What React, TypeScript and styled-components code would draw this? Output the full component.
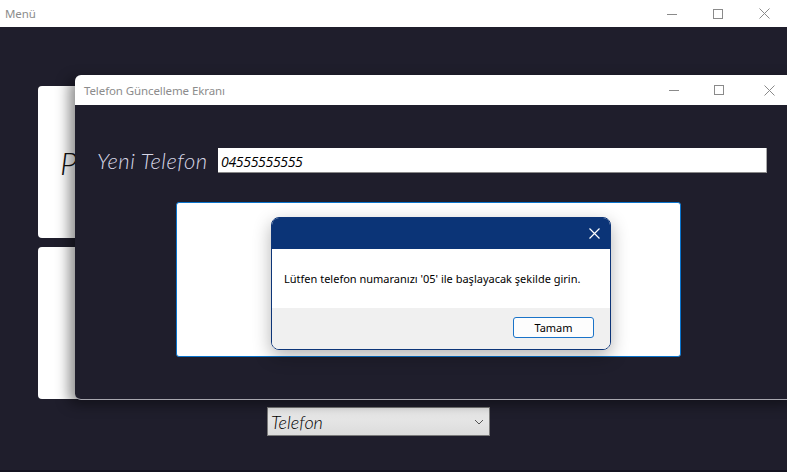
import styled, { createGlobalStyle } from 'styled-components';

const GlobalStyle = createGlobalStyle`
  html, body {
    margin: 0;
    padding: 0;
    width: 787px;
    height: 472px;
    overflow: hidden;
    background: #1f1e2c;
  }
  * { box-sizing: border-box; }
`;

const Screen = styled.div`
  position: relative;
  width: 787px;
  height: 472px;
  overflow: hidden;
  background: #1f1e2c;
  font-family: 'Noto Sans', 'Open Sans', sans-serif;
`;

const TitleBar = styled.div<{ $h: number }>`
  height: ${p => p.$h}px;
  background: #ffffff;
  display: flex;
  align-items: center;
  justify-content: space-between;
  flex-shrink: 0;
`;

const TitleText = styled.span<{ $pad: number }>`
  padding-left: ${p => p.$pad}px;
  font-size: 11.5px;
  color: #8c8c8c;
  letter-spacing: -0.1px;
`;

const Controls = styled.div`
  display: flex;
  align-items: center;
  height: 100%;
`;

const CtrlBtn = styled.div<{ $w: number }>`
  width: ${p => p.$w}px;
  height: 100%;
  display: flex;
  align-items: center;
  justify-content: center;
`;

const Body = styled.div`
  padding: 59px 0 0 38px;
  display: flex;
  flex-direction: column;
`;

const Card = styled.div`
  width: 600px;
  height: 152px;
  background: #ffffff;
  border-radius: 4px;
  margin-bottom: 9px;
  display: flex;
  align-items: center;
  padding-left: 22px;
`;

const CardLetter = styled.span`
  font-family: 'Lato', sans-serif;
  font-style: italic;
  font-weight: 300;
  font-size: 32px;
  color: #111;
`;

const SelectBox = styled.div`
  margin: -1px 0 0 229px;
  width: 223px;
  height: 29px;
  border: 1px solid #7a7a7a;
  background: linear-gradient(#ececec, #dcdcdc);
  display: flex;
  align-items: center;
  justify-content: space-between;
  padding: 0 5px 0 3px;
  font-family: 'Lato', sans-serif;
  font-style: italic;
  font-weight: 300;
  font-size: 18px;
  color: #000;
`;

const InnerWindow = styled.div`
  position: absolute;
  left: 75px;
  top: 75px;
  width: 722px;
  height: 325px;
  display: flex;
  flex-direction: column;
  background: #1f1e2c;
  border-radius: 6px 6px 0 6px;
  border-bottom: 1px solid #a8a8b0;
  overflow: hidden;
  box-shadow: -6px 4px 14px rgba(0, 0, 0, 0.45);
`;

const InnerBody = styled.div`
  flex: 1;
  padding: 43px 0 0 22px;
  display: flex;
  flex-direction: column;
`;

const FieldRow = styled.div`
  display: flex;
  align-items: center;
  gap: 12px;
`;

const FieldLabel = styled.span`
  width: 109px;
  white-space: nowrap;
  font-family: 'Lato', sans-serif;
  font-style: italic;
  font-weight: 300;
  font-size: 22px;
  line-height: 25px;
  color: #d6d6e6;
  letter-spacing: 0.5px;
`;

const FieldInput = styled.div`
  width: 549px;
  height: 25px;
  background: #ffffff;
  border-bottom: 1px solid #888;
  border-right: 1px solid #aaa;
  display: flex;
  align-items: center;
  padding: 2px 0 0 3px;
  font-family: 'Open Sans', sans-serif;
  font-style: italic;
  font-size: 14px;
  letter-spacing: -0.3px;
  color: #000;
`;

const Panel = styled.div`
  margin: 29px 0 0 79px;
  width: 505px;
  height: 155px;
  background: #ffffff;
  border: 1px solid #0a74cc;
  border-radius: 3px;
`;

const Dialog = styled.div`
  position: absolute;
  left: 271px;
  top: 217px;
  width: 340px;
  height: 133px;
  border: 1px solid #0d3578;
  border-radius: 8px;
  overflow: hidden;
  display: flex;
  flex-direction: column;
  box-shadow: 0 6px 18px rgba(0, 0, 0, 0.3);
`;

const DialogHead = styled.div`
  height: 31px;
  background: #0b3477;
  display: flex;
  justify-content: flex-end;
  align-items: center;
  padding-right: 10px;
`;

const DialogMsg = styled.div`
  height: 59px;
  background: #ffffff;
  display: flex;
  align-items: center;
  padding-left: 12px;
  font-size: 11px;
  color: #000;
`;

const DialogFoot = styled.div`
  flex: 1;
  background: #f0f0f0;
  display: flex;
  justify-content: flex-end;
  padding: 9px 16px 0 0;
`;

const OkButton = styled.div`
  width: 81px;
  height: 21px;
  border: 1px solid #1a73c8;
  border-radius: 3px;
  background: #fdfdfd;
  display: flex;
  align-items: center;
  justify-content: center;
  font-size: 11px;
  color: #000;
`;

const BottomLine = styled.div`
  position: absolute;
  left: 0;
  right: 0;
  bottom: 0;
  height: 2px;
  background: #141320;
`;

function WinControls({ widths, color }: { widths: [number, number, number]; color: string }) {
  return (
    <Controls>
      <CtrlBtn $w={widths[0]}>
        <svg width="10" height="10" viewBox="0 0 10 10">
          <line x1="0" y1="5.5" x2="10" y2="5.5" stroke={color} strokeWidth="1" />
        </svg>
      </CtrlBtn>
      <CtrlBtn $w={widths[1]}>
        <svg width="10" height="10" viewBox="0 0 10 10">
          <rect x="0.5" y="0.5" width="9" height="9" fill="none" stroke={color} strokeWidth="1" />
        </svg>
      </CtrlBtn>
      <CtrlBtn $w={widths[2]}>
        <svg width="11" height="11" viewBox="0 0 11 11">
          <path d="M0.5 0.5L10.5 10.5M10.5 0.5L0.5 10.5" stroke={color} strokeWidth="1" />
        </svg>
      </CtrlBtn>
    </Controls>
  );
}

export default function App() {
  return (
    <>
      <GlobalStyle />
      <Screen>
        <TitleBar $h={27}>
          <TitleText $pad={5}>Menü</TitleText>
          <WinControls widths={[46, 46, 46]} color="#8a8a8a" />
        </TitleBar>
        <Body>
          <Card>
            <CardLetter>P</CardLetter>
          </Card>
          <Card />
          <SelectBox>
            Telefon
            <svg width="10" height="6" viewBox="0 0 10 6">
              <path d="M1 1L5 5L9 1" fill="none" stroke="#555" strokeWidth="1" />
            </svg>
          </SelectBox>
        </Body>

        <InnerWindow>
          <TitleBar $h={30}>
            <TitleText $pad={9}>Telefon Güncelleme Ekranı</TitleText>
            <WinControls widths={[46, 44, 56]} color="#8a8a8a" />
          </TitleBar>
          <InnerBody>
            <FieldRow>
              <FieldLabel>Yeni Telefon</FieldLabel>
              <FieldInput>04555555555</FieldInput>
            </FieldRow>
            <Panel />
          </InnerBody>
        </InnerWindow>

        <Dialog>
          <DialogHead>
            <svg width="11" height="11" viewBox="0 0 11 11">
              <path d="M0.5 0.5L10.5 10.5M10.5 0.5L0.5 10.5" stroke="#ffffff" strokeWidth="1.2" />
            </svg>
          </DialogHead>
          <DialogMsg>Lütfen telefon numaranızı '05' ile başlayacak şekilde girin.</DialogMsg>
          <DialogFoot>
            <OkButton>Tamam</OkButton>
          </DialogFoot>
        </Dialog>
        <BottomLine />
      </Screen>
    </>
  );
}
